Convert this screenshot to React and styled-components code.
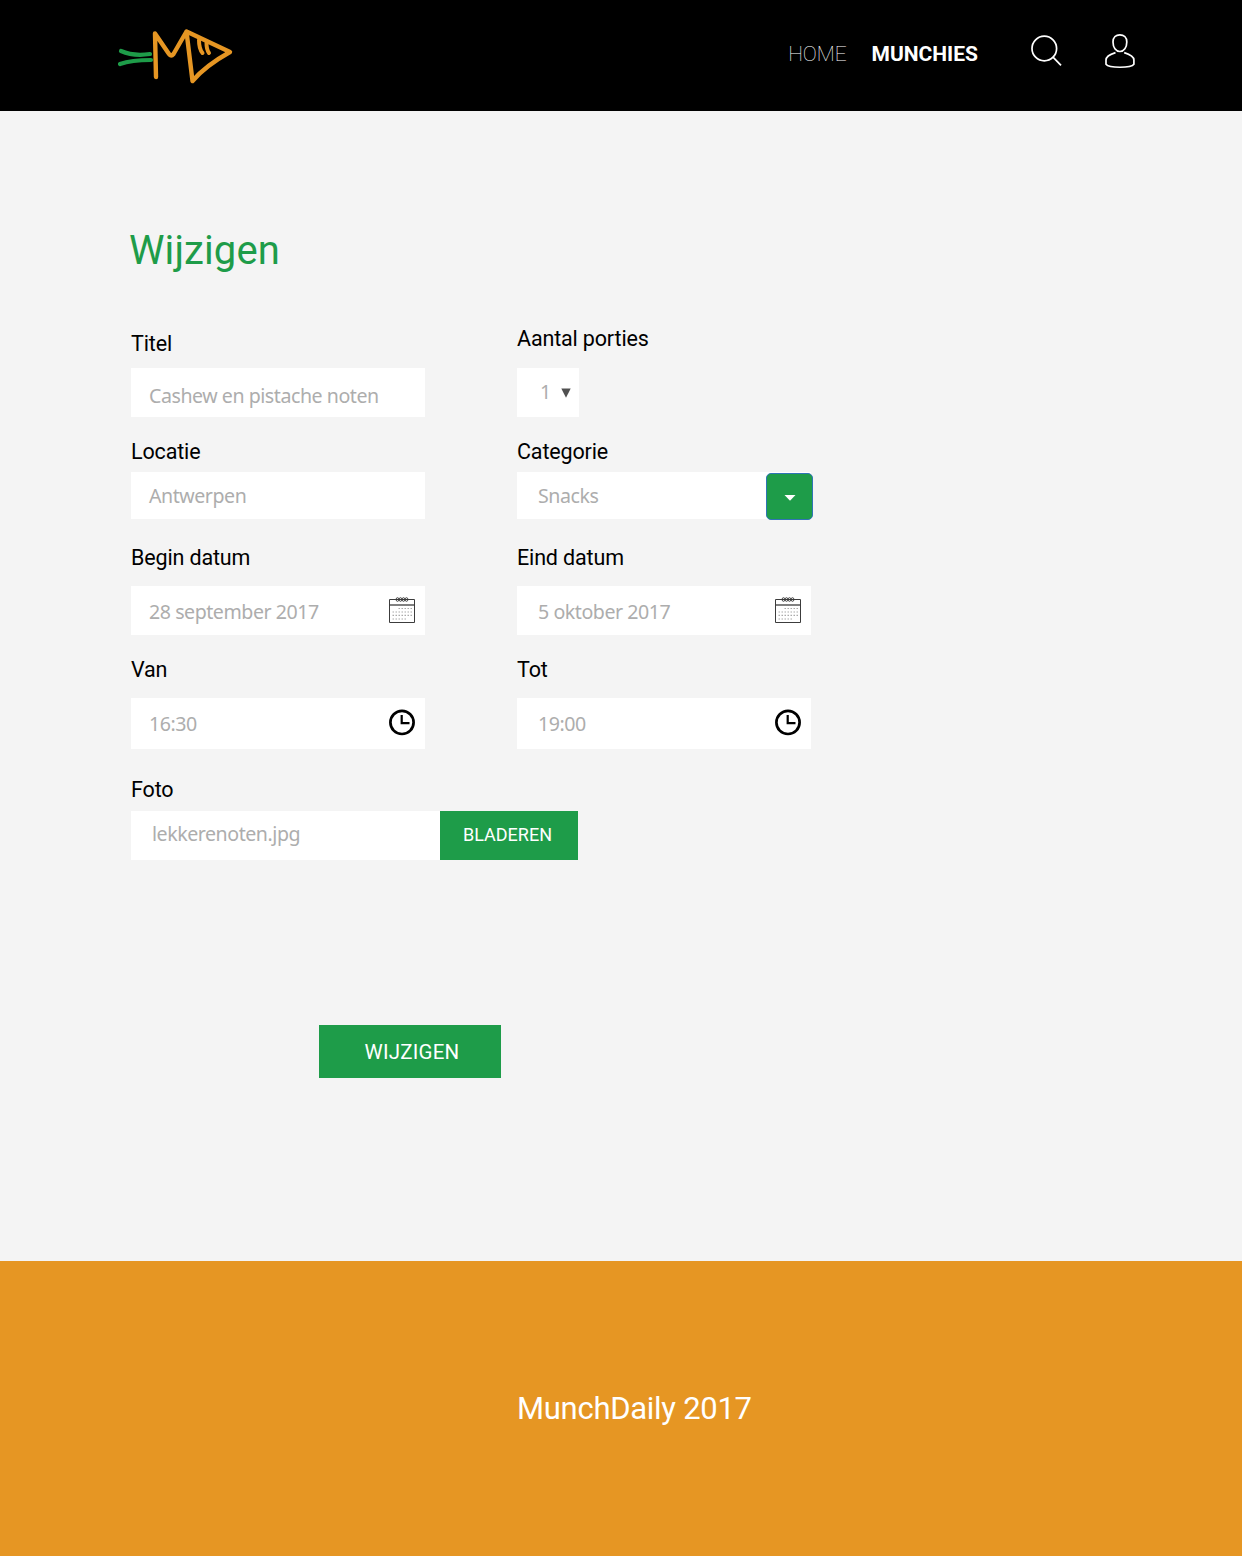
import React from "react";
import styled, { createGlobalStyle } from "styled-components";

const GREEN = "#1e9c49";
const ORANGE = "#e69623";

const GlobalStyle = createGlobalStyle`
  * { box-sizing: border-box; }
  body { margin: 0; background: #fff; font-family: Roboto, "Liberation Sans", sans-serif; }
`;

const Page = styled.div`
  display: flex;
  flex-direction: column;
  width: 1242px;
  height: 1557px;
`;

const Header = styled.header`
  display: flex;
  align-items: flex-start;
  justify-content: space-between;
  height: 111px;
  padding: 24px 105px 0 114px;
  background: #000;
`;

const Nav = styled.nav`
  display: flex;
  align-items: flex-start;
`;

const NavLink = styled.a`
  margin: 17px ${(p) => p.$gap}px 0 0;
  color: #fff;
  font-size: 21px;
  line-height: 26px;
  font-weight: ${(p) => (p.$active ? 700 : 100)};
  letter-spacing: ${(p) => p.$spacing || 0}px;
  white-space: nowrap;
`;

const IconButton = styled.a`
  display: flex;
  margin: ${(p) => p.$top}px 0 0 ${(p) => p.$gap || 0}px;
`;

const Main = styled.main`
  flex: 0 0 1150px;
  padding: 112px 131px 0;
  background: #f4f4f4;
`;

const Title = styled.h1`
  height: 56px;
  margin: 0 0 0 -2px;
  color: ${GREEN};
  font-size: 40px;
  font-weight: 400;
  line-height: 56px;
  letter-spacing: 0.1px;
`;

const Form = styled.form`
  display: flex;
  flex-direction: column;
`;

const Row = styled.div`
  display: flex;
  align-items: flex-end;
  gap: 92px;
  height: ${(p) => p.$height}px;
`;

const Field = styled.div`
  display: flex;
  flex-direction: column;
  width: ${(p) => p.$width || 294}px;
`;

const Label = styled.label`
  margin-bottom: ${(p) => p.$gap}px;
  color: #000;
  font-size: 21.5px;
  line-height: 26px;
  letter-spacing: -0.15px;
  white-space: nowrap;
`;

const Control = styled.div`
  display: flex;
  flex: none;
  align-items: center;
  justify-content: space-between;
  width: ${(p) => p.$width || 294}px;
  height: ${(p) => p.$height}px;
  padding: 0 ${(p) => p.$end || 10}px 0 ${(p) => p.$indent || 18}px;
  background: #fff;
`;

const Value = styled.span`
  padding: ${(p) => p.$drop || 0}px 0 ${(p) => p.$lift || 0}px;
  color: #adadad;
  font-family: "Noto Sans", sans-serif;
  font-size: 19.6px;
  line-height: 26px;
  letter-spacing: -0.46px;
  white-space: nowrap;
`;

const Joined = styled.div`
  display: flex;
`;

const DropButton = styled.button`
  display: flex;
  flex: none;
  align-items: center;
  justify-content: center;
  width: 47px;
  height: 47px;
  margin: 1px 0 -1px -45px;
  padding: 3px 0 0;
  border: 1px solid #2f74b5;
  border-radius: 5px;
  background: ${GREEN};
`;

const GreenButton = styled.button`
  flex: none;
  width: ${(p) => p.$width}px;
  height: ${(p) => p.$height}px;
  padding: ${(p) => p.$pad || "0"};
  border: 0;
  background: ${GREEN};
  color: #fff;
  font-family: Roboto, sans-serif;
  font-size: ${(p) => p.$size}px;
  letter-spacing: ${(p) => p.$spacing || 0}px;
`;

const Actions = styled.div`
  display: flex;
  padding: 165px 0 0 188px;
`;

const Footer = styled.footer`
  height: 295px;
  padding: 129px 0 0 517px;
  background: ${ORANGE};
  color: #fff;
  font-size: 31px;
  line-height: 38px;
  letter-spacing: -0.28px;
`;

const Logo = () => (
  <svg width="124" height="64" viewBox="114 24 124 64" fill="none" strokeLinecap="round" strokeLinejoin="round">
    <g stroke={GREEN} strokeWidth="4.2">
      <path d="M121 51C130 55 140 55.500 150 54" />
      <path d="M120 64C130 60.500 141 60 151 60" />
    </g>
    <g stroke={ORANGE} strokeWidth="4.4">
      <path d="M156 77L155 33.500L169 54Q171 57 173.500 54L186.500 31.500L230 52Q205 66 192.500 81L186.500 31.500" />
      <path d="M199 40C199 46 200 50 202.500 53" strokeWidth="4" />
      <path d="M206.500 43C206.500 47 207.500 51 209 53" strokeWidth="4" />
    </g>
  </svg>
);

const SearchIcon = () => (
  <svg width="34" height="34" viewBox="1029 34 34 34" fill="none" stroke="#fff" strokeWidth="1.7">
    <circle cx="1044.300" cy="48.500" r="12.300" />
    <path d="M1053 57.200L1061 65.300" />
  </svg>
);

const UserIcon = () => (
  <svg width="34" height="38" viewBox="1103 32 34 38" fill="none" stroke="#fff" strokeWidth="1.700" strokeLinejoin="round">
    <path d="M1119.900 34.800C1123.800 34.800 1126.800 37.500 1126.800 42C1126.800 47.500 1124 51.500 1119.900 51.500C1115.800 51.500 1113 47.500 1113 42C1113 37.500 1116 34.800 1119.900 34.800Z" />
    <path d="M1115.500 52.600C1110 54.300 1106 56.200 1106 60V64.300C1109 68.200 1131 68.200 1133.900 64.300V60C1133.900 56.200 1129.700 54.300 1124.200 52.600" />
  </svg>
);

const CalendarIcon = () => (
  <svg width="26" height="27" viewBox="0 0 26 27" fill="none" stroke="#3c3c3c">
    <path d="M.5 2.500H25.500V25.500H.5Z" />
    <path d="M.5 8H25.500" strokeWidth="1.300" />
    <g strokeWidth="1">
      {[8.5, 11.5, 14.5, 17.5].map((x) => (
        <ellipse key={x} cx={x} cy="2.500" rx="1.400" ry="1.800" />
      ))}
    </g>
    <g stroke="#aaa" strokeWidth="1.200" strokeDasharray="1.500 1.500">
      <path d="M9.500 11.500H23.500" />
      <path d="M3.500 15H23.500" />
      <path d="M3.500 18.300H23.500" />
      <path d="M3.500 22H17.500" />
    </g>
  </svg>
);

const ClockIcon = () => (
  <svg width="26" height="29" viewBox="0 0 26 29" fill="none" stroke="#000">
    <circle cx="13" cy="13.400" r="11.600" strokeWidth="2.700" />
    <path d="M12.700 5.900V14.100H20.500" strokeWidth="2.200" />
  </svg>
);

export default function App() {
  return (
    <Page>
      <GlobalStyle />
      <Header>
        <Logo />
        <Nav>
          <NavLink $gap={25} $spacing={-0.1}>HOME</NavLink>
          <NavLink $gap={51} $active>MUNCHIES</NavLink>
          <IconButton $top={10}><SearchIcon /></IconButton>
          <IconButton $top={8} $gap={40}><UserIcon /></IconButton>
        </Nav>
      </Header>
      <Main>
        <Title>Wijzigen</Title>
        <Form>
          <Row $height={138}>
            <Field>
              <Label $gap={11}>Titel</Label>
              <Control $height={49}><Value $drop={6}>Cashew en pistache noten</Value></Control>
            </Field>
            <Field>
              <Label $gap={16}>Aantal porties</Label>
              <Control $height={49} $width={62} $indent={23} $end={8}>
                <Value $lift={2}>1</Value>
                <svg width="10" height="10" viewBox="0 0 10 10"><path d="M.3 .5H9.700L5 9.800Z" fill="#505050" /></svg>
              </Control>
            </Field>
          </Row>
          <Row $height={102}>
            <Field>
              <Label $gap={7}>Locatie</Label>
              <Control $height={47}><Value $drop={1}>Antwerpen</Value></Control>
            </Field>
            <Field>
              <Label $gap={7}>Categorie</Label>
              <Joined>
                <Control $height={47} $indent={21}><Value $drop={1}>Snacks</Value></Control>
                <DropButton type="button">
                  <svg width="12" height="6" viewBox="0 0 12 6"><path d="M.5 0H11.500L6 5.800Z" fill="#fff" /></svg>
                </DropButton>
              </Joined>
            </Field>
          </Row>
          <Row $height={116}>
            <Field>
              <Label $gap={15}>Begin datum</Label>
              <Control $height={49}><Value $drop={2}>28 september 2017</Value><CalendarIcon /></Control>
            </Field>
            <Field>
              <Label $gap={15}>Eind datum</Label>
              <Control $height={49} $indent={21}><Value $drop={2}>5 oktober 2017</Value><CalendarIcon /></Control>
            </Field>
          </Row>
          <Row $height={114}>
            <Field>
              <Label $gap={15}>Van</Label>
              <Control $height={51}><Value>16:30</Value><ClockIcon /></Control>
            </Field>
            <Field>
              <Label $gap={15}>Tot</Label>
              <Control $height={51} $indent={21}><Value>19:00</Value><ClockIcon /></Control>
            </Field>
          </Row>
          <Row $height={111}>
            <Field $width={448}>
              <Label $gap={8}>Foto</Label>
              <Joined>
                <Control $height={49} $width={309} $indent={21}><Value $lift={3}>lekkerenoten.jpg</Value></Control>
                <GreenButton type="button" $width={138} $height={49} $size={18} $pad="0 3px 2px 0">BLADEREN</GreenButton>
              </Joined>
            </Field>
          </Row>
          <Actions>
            <GreenButton type="button" $width={182} $height={53} $size={20.5} $spacing={0.2} $pad="1px 0 0 4px">WIJZIGEN</GreenButton>
          </Actions>
        </Form>
      </Main>
      <Footer>MunchDaily 2017</Footer>
    </Page>
  );
}
